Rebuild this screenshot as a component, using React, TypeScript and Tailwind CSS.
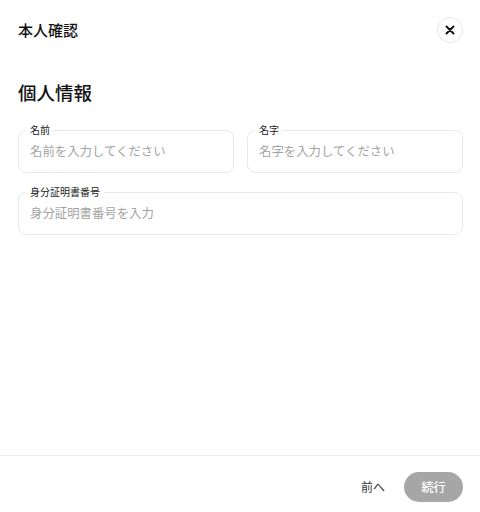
import React from "react";

function Field({ label, placeholder }: { label: string; placeholder: string }) {
  return (
    <div className="relative">
      <span className="absolute left-[8px] -top-[7px] bg-white px-[4px] text-[10px] leading-[13px] text-[#222]">
        {label}
      </span>
      <input
        className="block w-full h-[43px] rounded-[8px] border border-[#e8e8e8] pl-[11px] pb-[2px] text-[12.4px] text-[#222] placeholder:text-[#a3a3a3] outline-none"
        placeholder={placeholder}
      />
    </div>
  );
}

export default function App() {
  return (
    <div
      className="w-[480px] h-[512px] bg-white flex flex-col"
      style={{ fontFamily: '"Noto Sans CJK JP", "Noto Sans", sans-serif' }}
    >
      <div className="h-[60px] flex items-center justify-between pl-[18px] pr-[17px]">
        <h1 className="text-[15px] font-medium text-[#111]">本人確認</h1>
        <button className="w-[26px] h-[26px] rounded-full border border-[#e5e5e5] flex items-center justify-center text-[#111]">
          <svg width="10" height="10" viewBox="0 0 10 10" fill="none">
            <path d="M1.5 1.5L8.5 8.5M8.5 1.5L1.5 8.5" stroke="currentColor" strokeWidth="2" strokeLinecap="round" />
          </svg>
        </button>
      </div>
      <div className="flex-1 pr-[17px] pl-[18px]">
        <h2 className="mt-[19px] text-[18.5px] leading-[26px] font-medium text-[#111]">個人情報</h2>
        <div className="mt-[25px] grid grid-cols-2 gap-x-[13px]">
          <Field label="名前" placeholder="名前を入力してください" />
          <Field label="名字" placeholder="名字を入力してください" />
        </div>
        <div className="mt-[19px]">
          <Field label="身分証明書番号" placeholder="身分証明書番号を入力" />
        </div>
      </div>
      <div className="h-[57px] border-t border-[#ececec] flex items-start justify-end gap-[19px] pt-[16px] pr-[17px]">
        <button className="h-[30px] text-[12px] text-[#333]">前へ</button>
        <button className="w-[59px] h-[30px] rounded-full bg-[#a6a6a6] text-white text-[12px] font-medium">
          続行
        </button>
      </div>
    </div>
  );
}
